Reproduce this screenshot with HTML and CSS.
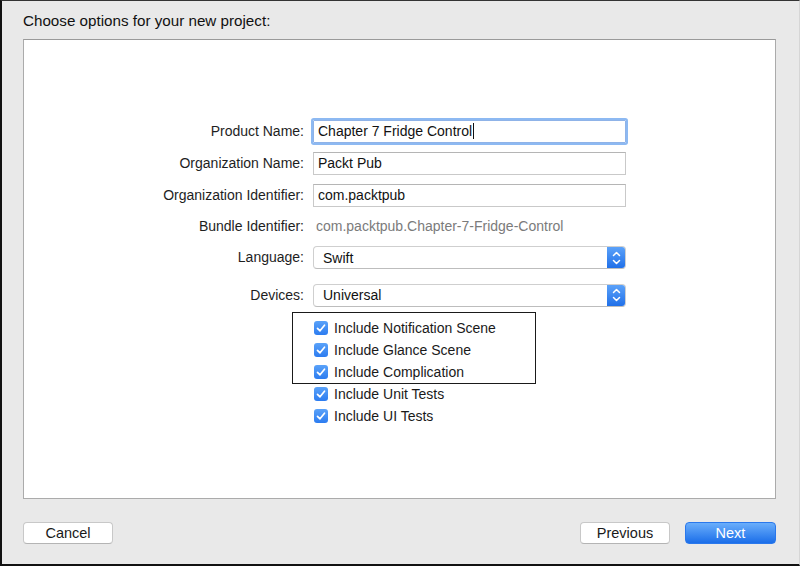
FILE: index.html
```html
<!DOCTYPE html>
<html>
<head>
<meta charset="utf-8">
<link rel="stylesheet" href="styles.css">
</head>
<body>
<div class="window">
  <div class="title">Choose options for your new project:</div>
  <div class="panel">
    <div class="form">
      <div class="row r32">
        <div class="label">Product Name:</div>
        <div class="field focus">Chapter 7 Fridge Control<span class="caret"></span></div>
      </div>
      <div class="row r32">
        <div class="label">Organization Name:</div>
        <div class="field">Packt Pub</div>
      </div>
      <div class="row r32">
        <div class="label">Organization Identifier:</div>
        <div class="field">com.packtpub</div>
      </div>
      <div class="row r30">
        <div class="label">Bundle Identifier:</div>
        <div class="static">com.packtpub.Chapter-7-Fridge-Control</div>
      </div>
      <div class="row r33">
        <div class="label">Language:</div>
        <div class="popup"><span class="ptext">Swift</span><span class="stepper"><svg width="19" height="22" viewBox="0 0 19 22"><path d="M6.5 8.5 L9.5 5.5 L12.5 8.5 M6.5 13.5 L9.5 16.5 L12.5 13.5" fill="none" stroke="#fff" stroke-width="1.5" stroke-linecap="round" stroke-linejoin="round"/></svg></span></div>
      </div>
      <div class="row r38">
        <div class="label">Devices:</div>
        <div class="popup"><span class="ptext">Universal</span><span class="stepper"><svg width="19" height="22" viewBox="0 0 19 22"><path d="M6.5 8.5 L9.5 5.5 L12.5 8.5 M6.5 13.5 L9.5 16.5 L12.5 13.5" fill="none" stroke="#fff" stroke-width="1.5" stroke-linecap="round" stroke-linejoin="round"/></svg></span></div>
      </div>
    </div>
    <div class="options">
      <div class="boxed">
        <div class="check"><span class="box"><svg width="14" height="14" viewBox="0 0 14 14"><path d="M3.5 7.3 L6 9.8 L10.5 4.2" fill="none" stroke="#fff" stroke-width="1.7" stroke-linecap="round" stroke-linejoin="round"/></svg></span>Include Notification Scene</div>
        <div class="check"><span class="box"><svg width="14" height="14" viewBox="0 0 14 14"><path d="M3.5 7.3 L6 9.8 L10.5 4.2" fill="none" stroke="#fff" stroke-width="1.7" stroke-linecap="round" stroke-linejoin="round"/></svg></span>Include Glance Scene</div>
        <div class="check"><span class="box"><svg width="14" height="14" viewBox="0 0 14 14"><path d="M3.5 7.3 L6 9.8 L10.5 4.2" fill="none" stroke="#fff" stroke-width="1.7" stroke-linecap="round" stroke-linejoin="round"/></svg></span>Include Complication</div>
      </div>
      <div class="plain">
        <div class="check"><span class="box"><svg width="14" height="14" viewBox="0 0 14 14"><path d="M3.5 7.3 L6 9.8 L10.5 4.2" fill="none" stroke="#fff" stroke-width="1.7" stroke-linecap="round" stroke-linejoin="round"/></svg></span>Include Unit Tests</div>
        <div class="check short"><span class="box"><svg width="14" height="14" viewBox="0 0 14 14"><path d="M3.5 7.3 L6 9.8 L10.5 4.2" fill="none" stroke="#fff" stroke-width="1.7" stroke-linecap="round" stroke-linejoin="round"/></svg></span>Include UI Tests</div>
      </div>
    </div>
  </div>
  <div class="footer">
    <div class="btn">Cancel</div>
    <div class="right">
      <div class="btn">Previous</div>
      <div class="btn primary">Next</div>
    </div>
  </div>
</div>
</body>
</html>
```

FILE: styles.css
```css
html, body {
  margin: 0;
  padding: 0;
}
body {
  font-family: "Liberation Sans", Arial, sans-serif;
  font-size: 14px;
  color: #1e1e1e;
}
.window {
  width: 800px;
  height: 566px;
  box-sizing: border-box;
  background: #e9e9e9;
  border-left: 2px solid #111;
  border-top: 1px solid #333;
  border-bottom: 2px solid #111;
  border-right: 1px solid #d6d6d6;
  display: flex;
  flex-direction: column;
}
.title {
  padding: 11px 0 0 21px;
  font-size: 15.2px;
  line-height: 18px;
  height: 18px;
  color: #111;
}
.panel {
  margin: 9px 0 0 21px;
  width: 753px;
  height: 460px;
  box-sizing: border-box;
  background: #fff;
  border: 1px solid #ababab;
  border-top-color: #9a9a9a;
}
.form {
  padding-top: 75px;
  display: flex;
  flex-direction: column;
}
.row {
  display: flex;
  align-items: center;
}
.r32 { height: 32px; }
.r30 { height: 30px; }
.r33 { height: 33px; }
.r38 { height: 34px; padding-top: 4px; }
.label {
  width: 280px;
  text-align: right;
  margin-right: 9px;
  color: #1e1e1e;
  line-height: 17px;
}
.field {
  width: 313px;
  height: 23px;
  box-sizing: border-box;
  border: 1px solid #c9c9c9;
  border-top-color: #b5b5b5;
  padding-left: 4px;
  line-height: 21px;
  color: #111;
  display: flex;
  align-items: center;
}
.field.focus {
  border-color: #8fb3e8;
  box-shadow: 0 0 0 2px #8db9f2;
  border-radius: 1px;
}
.caret {
  display: inline-block;
  width: 1px;
  height: 16px;
  background: #111;
  margin-left: 1px;
}
.static {
  padding-left: 3px;
  color: #7b7b7b;
  line-height: 17px;
}
.popup {
  width: 313px;
  height: 23px;
  box-sizing: border-box;
  border: 1px solid #cfcfcf;
  border-bottom-color: #bdbdbd;
  border-radius: 4px;
  background: #fff;
  display: flex;
  align-items: center;
  justify-content: space-between;
  overflow: hidden;
}
.ptext {
  padding-left: 9px;
  color: #111;
}
.stepper {
  width: 19px;
  height: 23px;
  margin-right: -1px;
  background: linear-gradient(#5ea4fa, #1e6ee8);
  display: flex;
  align-items: center;
  justify-content: center;
}
.options {
  margin-left: 268px;
}
.boxed {
  width: 244px;
  box-sizing: border-box;
  border: 1px solid #1a1a1a;
  padding: 4px 0 0 21px;
}
.plain {
  padding-left: 22px;
  margin-top: -1px;
}
.check {
  height: 22px;
  display: flex;
  align-items: center;
  color: #1a1a1a;
}
.check.short {
  height: 21px;
}
.box {
  width: 14px;
  height: 14px;
  border-radius: 3px;
  background: linear-gradient(#5aa2f9, #2c7cf0);
  margin-right: 6px;
  display: flex;
}
.footer {
  margin: 23px 0 0 21px;
  width: 753px;
  display: flex;
  justify-content: space-between;
}
.right {
  display: flex;
  gap: 15px;
}
.btn {
  width: 90px;
  height: 22px;
  box-sizing: border-box;
  background: #fff;
  border: 1px solid #c8c8c8;
  border-bottom-color: #b4b4b4;
  border-radius: 4px;
  text-align: center;
  line-height: 20px;
  font-size: 14.5px;
  color: #1a1a1a;
}
.btn.primary {
  width: 91px;
  border: 1px solid #2a78ec;
  background: linear-gradient(#6aaefb, #1b6ee9);
  color: #fff;
}
```
